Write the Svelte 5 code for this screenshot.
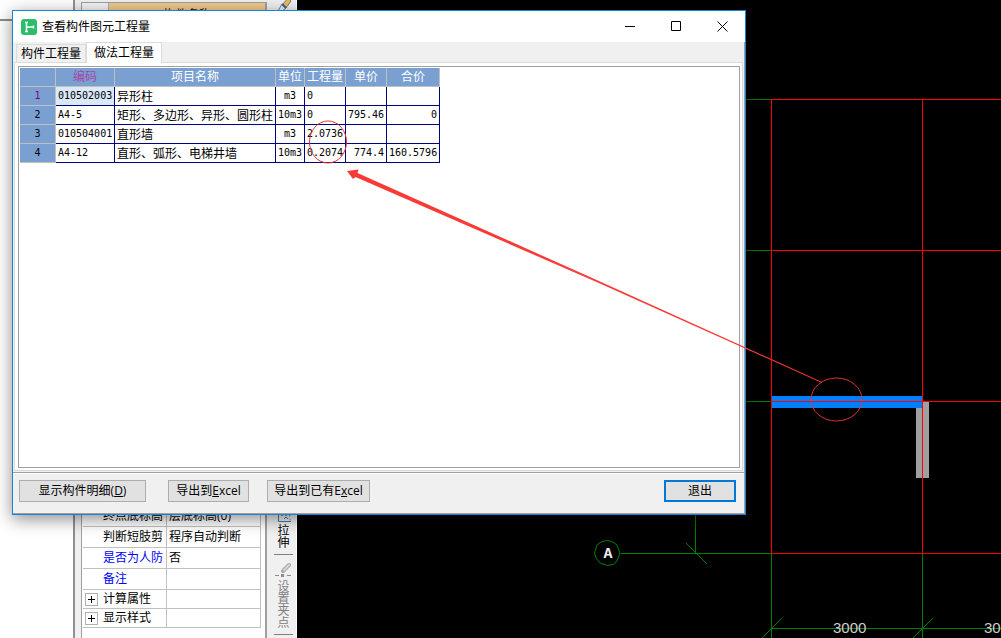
<script lang="ts">
	const rows = [
		{ code: '010502003', name: '异形柱', unit: 'm3', qty: '0', price: '', total: '' },
		{ code: 'A4-5', name: '矩形、多边形、异形、圆形柱', unit: '10m3', qty: '0', price: '795.46', total: '0' },
		{ code: '010504001', name: '直形墙', unit: 'm3', qty: '2.0736', price: '', total: '' },
		{ code: 'A4-12', name: '直形、弧形、电梯井墙', unit: '10m3', qty: '0.2074', price: '774.4', total: '160.5796' }
	];

	const props = [
		{ label: '终点底标高', value: '层底标高(0)' },
		{ label: '判断短肢剪', value: '程序自动判断' },
		{ label: '是否为人防', value: '否', link: true },
		{ label: '备注', value: '', link: true },
		{ label: '计算属性', value: '', group: true },
		{ label: '显示样式', value: '', group: true }
	];

	let tab = $state(1);
	let selected = $state(0);
</script>

<div class="app">
	<aside class="tree"><div class="tree-head"></div></aside>

	<section class="props">
		<div class="props-inner">
			<div class="props-head"><span></span><b>构件名称</b></div>
			<table class="prop-table">
				<tbody>
					{#each props as p}
						<tr class:short={p.group}>
							<th class:link={p.link}>
								<div class="prop-name">
									{#if p.group}<button class="expand" aria-label="展开{p.label}"></button>{/if}
									<span>{p.label}</span>
								</div>
							</th>
							<td>{p.value}</td>
						</tr>
					{/each}
				</tbody>
			</table>
		</div>
	</section>

	<nav class="toolbar">
		<svg class="brush" width="18" height="12" viewBox="0 0 18 12">
			<path d="M3 11 L7 4 L11 8 L7 11 Z" fill="#e8eef8" stroke="#6d83a8" />
			<path d="M8 4 L13 -2 L16 1 L11 8 Z" fill="#e3bd62" stroke="#8b7b5a" />
			<path d="M7 4 L11 8" stroke="#3e5f91" stroke-width="2" />
		</svg>
		<button class="tool">
			<svg width="16" height="14" viewBox="0 0 16 14">
				<path d="M2.500 2 V13.500 H15" fill="none" stroke="#4f74a8" />
				<path d="M5 7.500 H14 V13" fill="none" stroke="#7b94bb" stroke-dasharray="2 2" />
				<path d="M8 11 l2 -2 l2 2" fill="none" stroke="#4f74a8" />
			</svg>
			<span>拉伸</span>
		</button>
		<hr />
		<button class="tool dim">
			<svg width="17" height="16" viewBox="0 0 17 16">
				<path d="M8 9 L14 3" stroke="#a8a8a8" stroke-width="4" stroke-linecap="round" />
				<path d="M9 8 L14 3" stroke="#d6d6d6" stroke-width="2" stroke-linecap="round" />
				<path d="M0 13.500 H4 M12 13.500 H16" stroke="#8c8c8c" />
				<path d="M6 12 h3 v3 h-3 z" fill="#8c8c8c" />
			</svg>
			<span>设置夹点</span>
		</button>
		<hr />
	</nav>

	<!-- plan view -->
	<svg class="plan">
		<rect x="619" y="402" width="13" height="76" fill="#a0a0a0" />
		<rect x="475" y="396" width="151" height="12" fill="#0080ff" />
		<g class="green">
			<path d="M440 99.500 H474 M440 250.500 H474 M440 401.500 H474 M324 553.500 H474" />
			<path d="M398.500 500 V553 M474.500 554 V640 M625.500 554 V640" />
			<path d="M389 543 L410 564 M465 638 L485 618 M616 638 L636 618" />
			<line x1="474" y1="628.5" x2="100%" y2="628.5" />
			<path d="M310.500 540.500 L315 541.500 L320 545 L323 553 L320 561 L316 564.500 L310.500 565.500 L303 563 L299 558 L297.500 553 L300 545 L305 541.500 Z" />
		</g>
		<g class="red">
			<line x1="474" y1="99.5" x2="100%" y2="99.5" />
			<line x1="474" y1="250.5" x2="100%" y2="250.5" />
			<line x1="474" y1="401.5" x2="100%" y2="401.5" />
			<line x1="474" y1="553.5" x2="100%" y2="553.5" />
			<path d="M474.500 99 V553 M625.500 99 V554" />
		</g>
		<text class="axis" x="311" y="558" text-anchor="middle">A</text>
		<text x="536" y="633">3000</text>
		<text x="687" y="633">30</text>
	</svg>

	<div class="dialog" role="dialog" aria-label="查看构件图元工程量">
		<header class="titlebar">
			<svg class="logo" width="16" height="16" viewBox="0 0 16 16">
				<rect width="16" height="16" rx="3" fill="#2bbd68" />
				<path d="M4 3.500 H7 M5.500 3 V13 M4 12.500 H7 M5.500 8 H13 M12.500 6.500 V9.500" fill="none" stroke="#fff" stroke-width="1.500" />
			</svg>
			<h1>查看构件图元工程量</h1>
			<button aria-label="最小化"><svg width="11" height="11"><path d="M0 5.500 H10" /></svg></button>
			<button aria-label="最大化"><svg width="11" height="11"><path d="M.5 .5 H9.500 V9.500 H.5 Z" /></svg></button>
			<button aria-label="关闭"><svg width="11" height="11"><path d="M.5 .5 L10.500 10.500 M10.500 .5 L.5 10.500" /></svg></button>
		</header>

		<div class="body">
			<div class="tabs" role="tablist">
				<button role="tab" aria-selected={tab === 0} class:active={tab === 0} onclick={() => (tab = 0)}>构件工程量</button>
				<button role="tab" aria-selected={tab === 1} class:active={tab === 1} onclick={() => (tab = 1)}>做法工程量</button>
			</div>
			<div class="pane">
				<div class="sheet">
					<table class="grid">
						<colgroup>
							<col class="c-no" /><col class="c-code" /><col class="c-name" /><col class="c-unit" />
							<col class="c-mid" /><col class="c-mid" /><col class="c-total" />
						</colgroup>
						<thead>
							<tr>
								<th></th>
								<th class="current">编码</th>
								<th>项目名称</th>
								<th>单位</th>
								<th>工程量</th>
								<th>单价</th>
								<th>合价</th>
							</tr>
						</thead>
						<tbody>
							{#each rows as row, i}
								<tr class:selected={selected === i} onclick={() => (selected = i)}>
									<th>{i + 1}</th>
									<td class="code">{row.code}</td>
									<td class="name">{row.name}</td>
									<td class="center">{row.unit}</td>
									<td>{row.qty}</td>
									<td class="right">{row.price}</td>
									<td class="right">{row.total}</td>
								</tr>
							{/each}
						</tbody>
					</table>
				</div>
			</div>
			<footer class="actions">
				<button class="detail">显示构件明细(<u>D</u>)</button>
				<button class="export">导出到<u>E</u>xcel</button>
				<button class="append">导出到已有E<u>x</u>cel</button>
				<button class="exit">退出</button>
			</footer>
		</div>
	</div>

	<!-- markup drawn over everything -->
	<svg class="notes">
		<ellipse cx="328" cy="142" rx="18.5" ry="21" />
		<ellipse cx="836.5" cy="399.5" rx="25.5" ry="21.5" />
		<path d="M347 171 L358.500 169.500 L357.500 173 L600 281.500 L822 382 L822 383 L600 283.500 L355.500 177 L353 179 Z" />
	</svg>
</div>

<style>
	:global(body) {
		background: #000;
	}

	.app {
		position: relative;
		display: flex;
		height: 100vh;
		min-height: 638px;
		overflow: hidden;
		font-family: 'Open Sans', 'Noto Sans CJK SC', sans-serif;
		font-size: 12px;
		line-height: 16px;
		color: #000;
	}

	button {
		margin: 0;
		padding: 0;
		border: 0;
		background: none;
		font: inherit;
		color: inherit;
	}

	svg {
		display: block;
	}

	.tree {
		flex: none;
		box-sizing: border-box;
		width: 75px;
		background: #fff;
		border-right: 2px solid #8f8f96;
	}

	.tree-head {
		height: 19px;
		border-bottom: 2px solid #8c8c8c;
	}

	/* property panel */
	.props {
		flex: none;
		box-sizing: border-box;
		width: 196px;
		padding: 2px 4px 0 6px;
		background: #f0f0f0;
	}

	.props-inner {
		box-sizing: border-box;
		height: 100%;
		background: #fff;
		border: 1px solid #a0a0a0;
		border-width: 1px 2px 0 1px;
	}

	.props-head {
		display: flex;
		height: 21px;
		border-bottom: 1px solid #b0b0b0;
	}

	.props-head span {
		width: 26px;
		background: #f4f4f4;
		border-right: 1px solid #b0b0b0;
	}

	.props-head b {
		flex: 1;
		padding-top: 4px;
		background: #efcb8c;
		color: #3a1030;
		font-weight: 400;
		text-align: center;
	}

	.prop-table {
		width: 178px;
		margin: 481px 0 0 1px;
		border-spacing: 0;
		table-layout: fixed;
	}

	.prop-table th,
	.prop-table td {
		box-sizing: border-box;
		height: 21px;
		padding: 0 0 0 2px;
		border-right: 1px solid #c0c0c0;
		border-bottom: 1px solid #c0c0c0;
		font-weight: 400;
		text-align: left;
		white-space: nowrap;
	}

	.prop-table th {
		width: 84px;
	}

	.prop-table .short th,
	.prop-table .short td {
		height: 19px;
	}

	.prop-table .link {
		color: #00f;
	}

	.prop-name {
		display: flex;
		justify-content: flex-start;
		align-items: center;
		gap: 5px;
		padding-left: 18px;
	}

	.short .prop-name {
		padding-left: 0;
	}

	.expand {
		box-sizing: border-box;
		width: 13px;
		height: 13px;
		border: 1px solid #b0b0b0;
		background:
			linear-gradient(#000, #000) center / 7px 1px no-repeat,
			linear-gradient(#000, #000) center / 1px 7px no-repeat;
	}

	/* vertical toolbar */
	.toolbar {
		flex: none;
		display: flex;
		flex-direction: column;
		align-items: center;
		box-sizing: border-box;
		width: 26px;
		background: #f0f0f0;
		border-right: 1px solid #fff;
	}

	.brush {
		flex: none;
		margin-bottom: 496px;
	}

	.tool {
		flex: none;
		display: flex;
		flex-direction: column;
		align-items: center;
		line-height: 12px;
	}

	.tool span {
		width: 12px;
		padding-top: 3px;
		word-break: break-all;
	}

	.tool.dim {
		color: #808080;
	}

	.toolbar hr {
		flex: none;
		width: 19px;
		height: 1px;
		margin: 5px 0 7px;
		border: 0;
		background: #808080;
	}

	.plan {
		flex: 1;
		min-width: 0;
		height: 100%;
		background: #000;
	}

	.green {
		fill: none;
		stroke: #008000;
	}

	.red {
		fill: none;
		stroke: #f00;
	}

	.plan text {
		fill: #d0d0d0;
		font: 15px 'Liberation Sans', sans-serif;
	}

	.plan .axis {
		fill: #eee;
		font: bold 15px 'Liberation Mono', monospace;
	}

	/* dialog window */
	.dialog {
		position: absolute;
		top: 10px;
		left: 12px;
		box-sizing: border-box;
		width: 734px;
		background: #f0f0f0;
		border: 1px solid #1883d7;
		box-shadow: 0 4px 16px rgba(0, 0, 0, 0.45);
	}

	.titlebar {
		display: flex;
		align-items: center;
		height: 31px;
		padding-left: 8px;
		background: #fff;
	}

	.titlebar h1 {
		flex: 1;
		margin: 0 0 0 5px;
		font-size: 12px;
		font-weight: 400;
	}

	.titlebar button {
		display: flex;
		align-items: center;
		justify-content: center;
		width: 46px;
		height: 30px;
	}

	.titlebar button path {
		fill: none;
		stroke: #000;
	}

	.body {
		border: 1px solid #a0a0a0;
		border-width: 0 1px 1px 0;
	}

	.tabs {
		display: flex;
		align-items: flex-end;
		height: 20px;
		padding-left: 3px;
	}

	.tabs button {
		box-sizing: border-box;
		width: 70px;
		height: 18px;
		padding-top: 1px;
		border: 1px solid #dcdcdc;
		border-bottom: 0;
	}

	.tabs button.active {
		z-index: 1;
		width: 76px;
		height: 21px;
		margin-bottom: -1px;
		padding-bottom: 1px;
		background: #fff;
	}

	.pane {
		margin: 0 1px;
		padding: 3px 2px 2px 3px;
		background: #fff;
		border: 1px solid #dcdcdc;
	}

	.sheet {
		box-sizing: border-box;
		height: 402px;
		padding: 1px;
		border: 1px solid #a0a0a0;
	}

	.grid {
		width: 420px;
		border-spacing: 0;
		table-layout: fixed;
	}

	.c-no {
		width: 36px;
	}

	.c-code {
		width: 59px;
	}

	.c-name {
		width: 161px;
	}

	.c-unit {
		width: 29px;
	}

	.c-mid {
		width: 41px;
	}

	.c-total {
		width: 53px;
	}

	.grid th,
	.grid td {
		box-sizing: border-box;
		height: 19px;
		padding: 0;
		border-right: 1px solid #000080;
		border-bottom: 1px solid #000080;
		white-space: nowrap;
	}

	.grid td {
		padding: 0 2px;
		font: 10px/16px 'DejaVu Sans Mono', monospace;
	}

	.grid .name {
		font: 12px/16px 'Noto Sans CJK SC', sans-serif;
	}

	.grid th {
		background: #7aa0d2;
		border-color: #c0c0c0;
		color: #fff;
		font-weight: 400;
	}

	.grid tbody th {
		color: #000;
		font: 10px/16px 'DejaVu Sans Mono', monospace;
	}

	.grid .current {
		color: #a349a4;
	}

	.grid .selected th {
		color: #800080;
	}

	.grid .selected .code {
		background: #d9e9f9;
	}

	.grid .center {
		text-align: center;
	}

	.grid .right {
		text-align: right;
	}

	.actions {
		display: flex;
		margin-top: 1px;
		padding: 7px 8px 11px 6px;
		border-top: 1px solid #a0a0a0;
		box-shadow: inset 0 1px #fff;
	}

	.actions button {
		box-sizing: border-box;
		height: 22px;
		background: #e1e1e1;
		border: 1px solid #adadad;
	}

	.actions .detail {
		width: 127px;
		margin-right: 22px;
	}

	.actions .export {
		width: 81px;
		margin-right: 18px;
	}

	.actions .append {
		width: 103px;
	}

	.actions .exit {
		width: 72px;
		margin-left: auto;
		border: 2px solid #0078d7;
	}

	.notes {
		position: absolute;
		inset: 0;
		width: 100%;
		height: 100%;
		pointer-events: none;
	}

	.notes ellipse {
		fill: none;
		stroke: #e03434;
	}

	.notes path {
		fill: #f93a37;
	}
</style>
